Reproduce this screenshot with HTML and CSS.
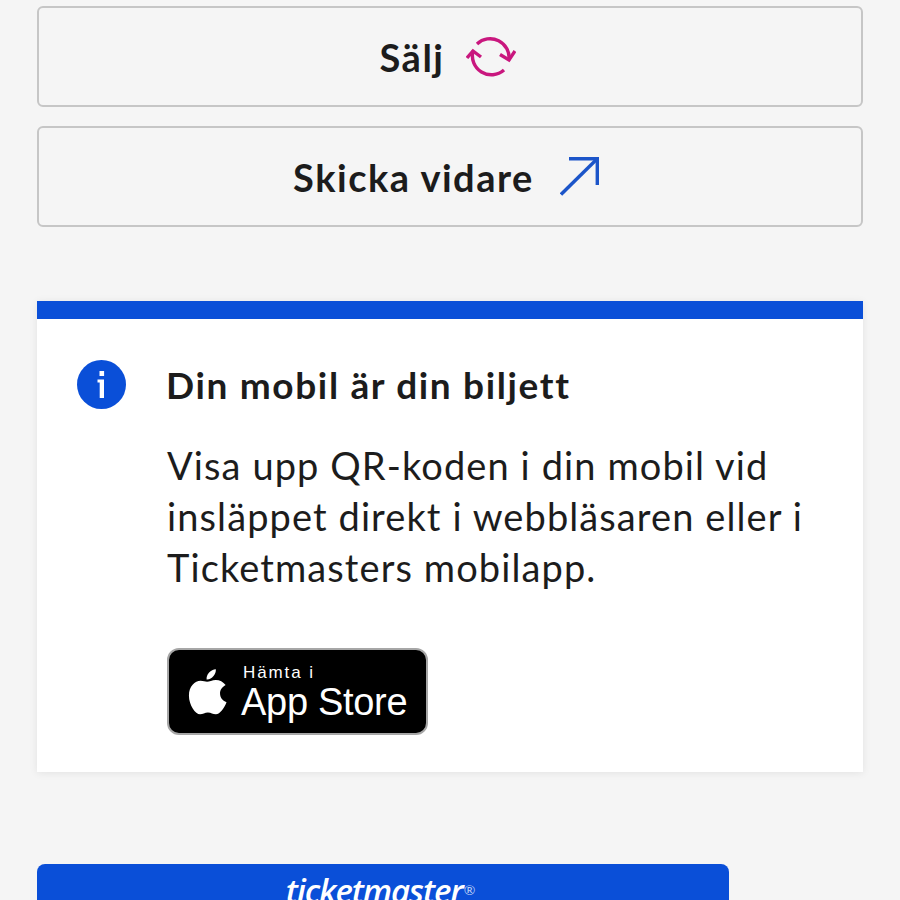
FILE: index.html
```html
<!DOCTYPE html>
<html lang="sv">
  <head>
    <meta charset="utf-8">
    <meta name="viewport" content="width=device-width">
    <title>Din biljett</title>
    <link rel="stylesheet" href="styles.css">
  </head>

<body>
    <div class="actions">
      <button class="action action-sell">
        <span>Sälj</span>
        <svg class="icon-sell" width="50" height="40" viewBox="0 0 50 40" fill="none" stroke="#c9177e" stroke-width="3.4">
          <path d="M11 7 A19 19 0 0 1 43 23"/>
          <path d="M34 17.500 L43 23 L49 14"/>
          <path d="M38 33 A19 19 0 0 1 7 14"/>
          <path d="M1 21 L7 14 L15 20"/>
        </svg>
      </button>
      <button class="action action-send">
        <span>Skicka vidare</span>
        <svg class="icon-send" width="39" height="39" viewBox="0 0 39 39" fill="none" stroke="#1c55c9" stroke-width="3.4">
          <path d="M1 37.500 L37 2"/>
          <path d="M9 1.700 H37.300 V28"/>
        </svg>
      </button>
    </div>

    <section class="card">
      <svg class="info" width="49" height="49" viewBox="0 0 49 49">
        <circle cx="24.500" cy="24.500" r="24.500" fill="#0a4fd8"/>
        <rect x="22.500" y="11" width="4.600" height="5" fill="#fff"/>
        <path d="M20.500 19.500 H27 V38 H22.700 V22.500 H20.500 Z" fill="#fff"/>
      </svg>
      <div class="card-text">
        <h2>Din mobil är din biljett</h2>
        <p>Visa upp QR-koden i din mobil vid insläppet direkt i webbläsaren eller i Ticketmasters mobilapp.</p>
        <a class="store">
          <svg width="39" height="47" viewBox="0 0 42 50" fill="#fff">
            <path d="M30 1 C30.500 6 25.500 12.500 20 12 C19.500 6.500 24.500 1.500 30 1 Z"/>
            <path d="M20.500 14.500 C23 14.500 26 12.500 30 12.500 C34 12.500 38 14.500 40.500 18 C36 20.500 34.500 24 34.500 27 C34.500 31.500 37 35 41.500 36.500 C39.500 42 34.500 49.500 30 49.500 C26.500 49.500 25 47.500 21.500 47.500 C18 47.500 16 49.500 13 49.500 C8 49.500 1 39.500 1 29.500 C1 19.500 7.500 13.500 13.500 13.500 C16.500 13.500 18.500 14.500 20.500 14.500 Z"/>
          </svg>
          <span class="store-text">
            <span class="store-small">Hämta i</span>
            <span class="store-big">App Store</span>
          </span>
        </a>
      </div>
    </section>

    <div class="ticket">
      <span class="brand">ticketmaster</span><span class="reg">®</span>
    </div>
</body>

</html>
```

FILE: styles.css
```css
html {
  height: 900px;
  overflow: hidden;
}

body {
  margin: 0;
  padding: 6px 37px 0 37px;
  background-color: #f5f5f5;
  color: #1c1c1c;
  font-family: Lato, "Noto Sans", sans-serif;
}

.actions {
  display: flex;
  flex-direction: column;
  gap: 19px;
}

.action {
  display: flex;
  align-items: center;
  justify-content: center;
  height: 101px;
  width: 826px;
  border: 2px solid #c6c6c6;
  border-radius: 6px;
  background-color: #f5f5f5;
  color: #1c1c1c;
  font-family: inherit;
  font-size: 38px;
  font-weight: 700;
  letter-spacing: 1.5px;
}

.action-sell {
  padding-right: 10px;
}

.action-send {
  padding-right: 14px;
}

.icon-sell {
  margin-left: 22px;
}

.icon-send {
  margin-left: 26px;
}

.card {
  display: flex;
  margin-top: 74px;
  width: 826px;
  height: 471px;
  box-sizing: border-box;
  padding: 41px 40px 0 40px;
  gap: 41px;
  background-color: #fff;
  border-top: 18px solid #0a4fd8;
  box-shadow: 0 1px 8px rgba(0, 0, 0, 0.08);
}

.info {
  flex: none;
}

.card-text h2 {
  margin: 0 0 0 -1px;
  font-size: 37px;
  font-weight: 700;
  line-height: 49px;
  letter-spacing: 1.65px;
}

.card-text p {
  margin: 31px 0 0 0;
  font-size: 38px;
  line-height: 51px;
  letter-spacing: 1.1px;
}

.store {
  display: flex;
  align-items: center;
  gap: 14px;
  margin-top: 55px;
  width: 261px;
  height: 87px;
  box-sizing: border-box;
  padding-left: 19px;
  background-color: #000;
  border: 2px solid #a6a6a6;
  border-radius: 12px;
  color: #fff;
  font-family: "Liberation Sans", sans-serif;
}

.store-text {
  display: flex;
  flex-direction: column;
}

.store-small {
  margin-left: 2px;
  font-size: 17px;
  line-height: 20px;
  letter-spacing: 1.9px;
}

.store-big {
  font-size: 38px;
  line-height: 38px;
  letter-spacing: -0.3px;
}

.ticket {
  margin-top: 92px;
  width: 692px;
  height: 60px;
  padding: 4px 5px 0 0;
  box-sizing: border-box;
  text-align: center;
  background-color: #0a4fd8;
  border-radius: 8px 8px 0 0;
  color: #fff;
}

.brand {
  font-family: "Open Sans", sans-serif;
  font-style: italic;
  font-weight: 600;
  font-size: 33px;
  letter-spacing: -1.1px;
}

.reg {
  font-size: 14px;
  margin-left: 1px;
  vertical-align: 8px;
  color: #b9cdf5;
}
```
